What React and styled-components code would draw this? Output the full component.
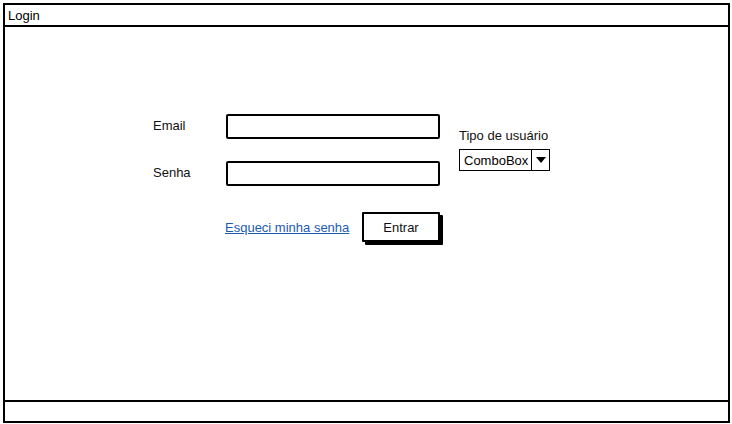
import React from "react";
import styled, { createGlobalStyle } from "styled-components";

const Global = createGlobalStyle`
	html, body {
		margin: 0;
		padding: 0;
		background: #fff;
	}
	body {
		font-family: "Liberation Sans", Arial, sans-serif;
		font-size: 13px;
		color: #111;
	}
`

const Window = styled.div`
	margin: 3px;
	width: 727px;
	height: 420px;
	box-sizing: border-box;
	border: 2px solid #000;
	display: flex;
	flex-direction: column;
`

const TitleBar = styled.div`
	height: 20px;
	border-bottom: 2px solid #000;
	display: flex;
	align-items: center;
	padding-left: 3px;
	font-size: 13px;
	color: #000;
`

const Body = styled.div`
	flex: 1;
`

const Footer = styled.div`
	height: 19px;
	border-top: 2px solid #000;
`

const Form = styled.div`
	display: flex;
	padding: 87px 0 0 147px;
`

const Fields = styled.div`
	display: grid;
	grid-template-columns: 74px 214px;
	row-gap: 22px;
	align-items: center;
`

const Label = styled.label`
	font-size: 13px;
	color: #111;
	padding-left: ${p => p.$indent || 0}px;
	padding-bottom: ${p => p.$lift || 0}px;
`

const Input = styled.div`
	height: 25px;
	box-sizing: border-box;
	border: 2px solid #000;
	border-radius: 2px;
	background: #fff;
`

const Actions = styled.div`
	grid-column: 2;
	display: flex;
	align-items: center;
	justify-content: space-between;
	margin-top: 4px;
`

const Link = styled.a`
	color: #1c5bb0;
	text-decoration: underline;
	font-size: 13px;
	margin-left: -1px;
	cursor: pointer;
`

const Button = styled.button`
	width: 78px;
	height: 30px;
	box-sizing: border-box;
	border: 2px solid #000;
	border-radius: 1px;
	background: #fff;
	box-shadow: 3px 3px 0 #000;
	font-family: inherit;
	font-size: 13px;
	color: #111;
	padding: 0;
`

const Side = styled.div`
	margin-left: 19px;
	padding-top: 14px;
	display: flex;
	flex-direction: column;
	gap: 6px;
`

const Combo = styled.div`
	display: flex;
	width: 91px;
	height: 22px;
	box-sizing: border-box;
	border: 1px solid #000;
`

const ComboText = styled.div`
	flex: 1;
	display: flex;
	align-items: center;
	padding-left: 4px;
	font-size: 13px;
	color: #000;
	border-right: 1px solid #000;
`

const ComboArrow = styled.div`
	width: 17px;
	display: flex;
	align-items: center;
	justify-content: center;
`

export default () => {
	return (
		<>
			<Global />
			<Window>
				<TitleBar>Login</TitleBar>
				<Body>
					<Form>
						<Fields>
							<Label $indent={1} $lift={2}>Email</Label>
							<Input />
							<Label $indent={1} $lift={2}>Senha</Label>
							<Input />
							<Actions>
								<Link>Esqueci minha senha</Link>
								<Button>Entrar</Button>
							</Actions>
						</Fields>
						<Side>
							<Label>Tipo de usuário</Label>
							<Combo>
								<ComboText>ComboBox</ComboText>
								<ComboArrow>
									<svg width="10" height="6" viewBox="0 0 10 6">
										<path d="M0 0 L10 0 L5 6 Z" fill="#000" />
									</svg>
								</ComboArrow>
							</Combo>
						</Side>
					</Form>
				</Body>
				<Footer />
			</Window>
		</>
	);
}
